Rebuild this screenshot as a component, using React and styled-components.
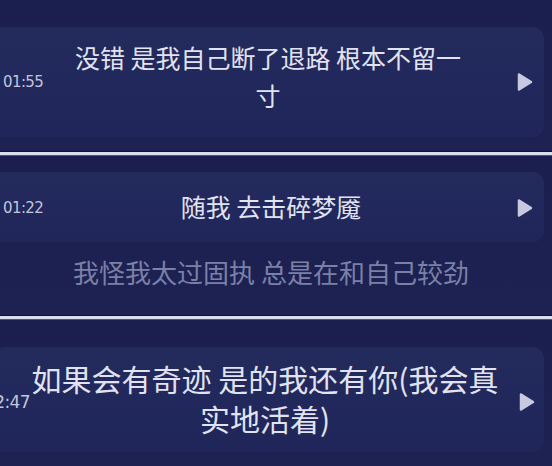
import React from 'react';
import styled, { createGlobalStyle } from 'styled-components';

const GlobalStyle = createGlobalStyle`
  html, body {
    margin: 0;
    padding: 0;
    background: #1b2050;
  }
  body {
    font-family: "Noto Sans CJK SC", "Noto Sans", sans-serif;
  }
`;

const Screen = styled.div`
  width: 552px;
  height: 466px;
  overflow: hidden;
  display: flex;
  flex-direction: column;
  background: #1b2050;
`;

// one frame of the video, stacked
const Panel = styled.section`
  height: ${(p) => p.$height}px;
  padding-top: ${(p) => p.$top}px;
  box-sizing: border-box;
  display: flex;
  flex-direction: column;
  flex-shrink: 0;
  background: linear-gradient(180deg, #1a1f4f 0%, #1d2253 100%);
`;

const Divider = styled.div`
  height: 5px;
  flex-shrink: 0;
  box-sizing: border-box;
  background: #d9ddf0;
  border-top: 1px solid #0f1332;
  border-bottom: 1px solid #50557a;
`;

const Card = styled.div`
  display: grid;
  grid-template-columns: ${(p) => p.$timeCol}px 1fr ${(p) => p.$playCol}px;
  align-items: center;
  margin: 0 8px 0 ${(p) => p.$left}px;
  padding: ${(p) => p.$padTop}px 0 ${(p) => p.$padBottom}px;
  border-radius: 12px;
  background: linear-gradient(180deg, #232a5c 0%, #20265a 100%);
`;

const Time = styled.span`
  margin-left: ${(p) => p.$indent}px;
  font-family: "DejaVu Sans", "Noto Sans", sans-serif;
  font-size: ${(p) => p.$size}px;
  letter-spacing: -0.6px;
  color: #c2c5dc;
  white-space: nowrap;
`;

const Lyric = styled.p`
  margin: ${(p) => p.$shift}px auto ${(p) => -p.$shift}px;
  max-width: ${(p) => p.$max}px;
  text-align: center;
  font-size: ${(p) => p.$size}px;
  line-height: ${(p) => p.$lh}px;
  color: #e1e3f0;
`;

const DimLine = styled.p`
  margin: ${(p) => p.$top}px 0 0;
  padding-right: 10px;
  text-align: center;
  font-size: 26px;
  line-height: 36px;
  color: #7b80a7;
`;

const PlayBox = styled.div`
  display: flex;
  justify-content: flex-end;
  padding-right: ${(p) => p.$right}px;
  color: #c6c9e0;
`;

function PlayIcon() {
  return (
    <svg width="17" height="20" viewBox="0 0 17 20">
      <path
        d="M3 2.5 L15 10 L3 17.5 Z"
        fill="currentColor"
        stroke="currentColor"
        strokeWidth="2.5"
        strokeLinejoin="round"
      />
    </svg>
  );
}

function Row({
  time,
  text,
  left = -12,
  timeCol = 62,
  playCol = 52,
  playRight = 11,
  indent = 15,
  timeSize = 15,
  size,
  lh,
  max,
  shift = 0,
  padTop,
  padBottom,
}) {
  return (
    <Card $timeCol={timeCol} $playCol={playCol} $left={left} $padTop={padTop} $padBottom={padBottom}>
      <Time $indent={indent} $size={timeSize}>{time}</Time>
      <Lyric $size={size} $lh={lh} $max={max} $shift={shift}>{text}</Lyric>
      <PlayBox $right={playRight}>
        <PlayIcon />
      </PlayBox>
    </Card>
  );
}

export default function App() {
  return (
    <Screen>
      <GlobalStyle />
      <Panel $height={151} $top={27}>
        <Row
          time="01:55"
          text="没错 是我自己断了退路 根本不留一寸"
          timeCol={56}
          size={25}
          lh={38}
          max={400}
          shift={-6}
          padTop={17}
          padBottom={17}
        />
      </Panel>
      <Divider />
      <Panel $height={159} $top={16}>
        <Row
          time="01:22"
          text="随我 去击碎梦魇"
          size={25}
          lh={36}
          max={430}
          shift={-2}
          padTop={18}
          padBottom={16}
        />
        <DimLine $top={12}>我怪我太过固执 总是在和自己较劲</DimLine>
      </Panel>
      <Divider />
      <Panel $height={146} $top={27}>
        <Row
          time="02:47"
          text="如果会有奇迹 是的我还有你(我会真实地活着)"
          left={-6}
          timeCol={36}
          playCol={44}
          playRight={9}
          indent={-10}
          timeSize={17}
          size={30}
          lh={40}
          max={478}
          shift={-4}
          padTop={15}
          padBottom={10}
        />
      </Panel>
    </Screen>
  );
}
